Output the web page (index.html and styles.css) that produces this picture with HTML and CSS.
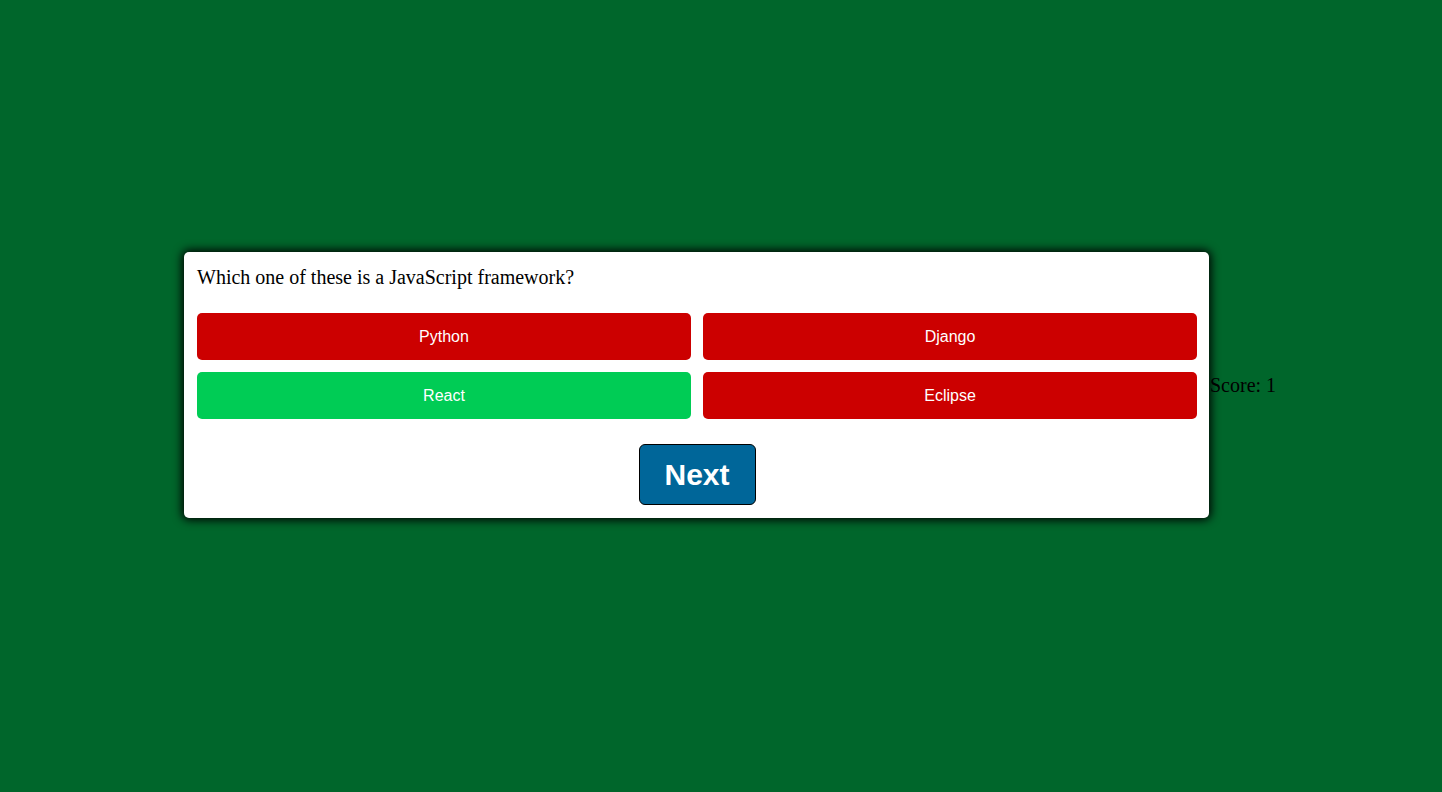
FILE: index.html
```html
<!DOCTYPE html>
<html lang="en">
<head>
<meta charset="utf-8">
<title>Quiz</title>
<link rel="stylesheet" href="styles.css">
</head>
<body>
  <main class="page">
    <section class="quiz">
      <div class="question">Which one of these is a JavaScript framework?</div>
      <div class="answers">
        <button class="answer wrong">Python</button>
        <button class="answer wrong">Django</button>
        <button class="answer right">React</button>
        <button class="answer wrong">Eclipse</button>
      </div>
      <div class="controls">
        <button class="next">Next</button>
      </div>
    </section>
    <div class="score">Score: 1</div>
  </main>
</body>
</html>
```
FILE: styles.css
```css
html, body {
  margin: 0;
  padding: 0;
}
body {
  background: #00662b;
  font-family: "Liberation Serif", "Times New Roman", serif;
  font-size: 16px;
  color: #000;
}
.page {
  height: 770px;
  display: flex;
  align-items: center;
  justify-content: center;
}
.quiz {
  box-sizing: border-box;
  width: 1025px;
  background: #fff;
  border-radius: 5px;
  padding: 13px 12px 13px 13px;
  box-shadow: 0 0 10px 2px #000;
}
.question {
  font-size: 20px;
  line-height: 22px;
  margin-top: 1px;
}
.answers {
  display: grid;
  grid-template-columns: 1fr 1fr;
  gap: 12px;
  margin-top: 25px;
}
.answer {
  height: 47px;
  border: 0;
  border-radius: 5px;
  color: #fff;
  font-family: "Liberation Sans", Arial, sans-serif;
  font-size: 16px;
  padding: 0;
}
.wrong { background: #cc0000; }
.right { background: #00cc55; }
.controls {
  display: flex;
  justify-content: center;
  margin-top: 25px;
}
.next {
  width: 117px;
  height: 61px;
  background: #006699;
  border: 1px solid #000;
  border-radius: 6px;
  color: #fff;
  font-family: "Liberation Sans", Arial, sans-serif;
  font-weight: bold;
  font-size: 30px;
  padding: 0;
}
.score {
  width: 66px;
  margin-left: 1px;
  margin-right: -18px;
  white-space: nowrap;
  font-size: 20px;
}
```
